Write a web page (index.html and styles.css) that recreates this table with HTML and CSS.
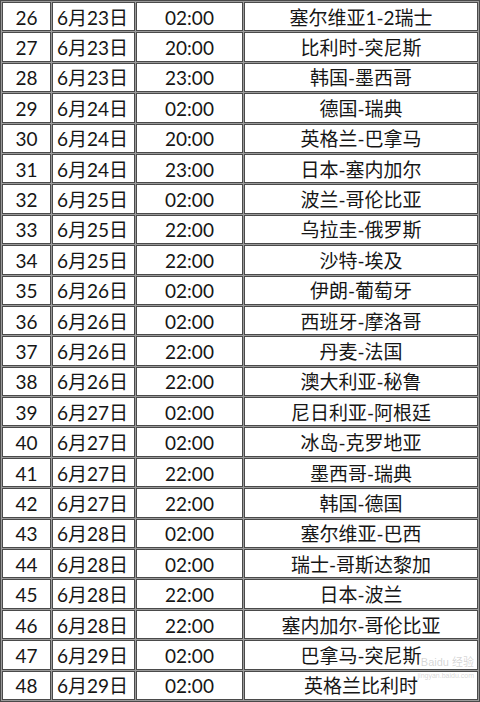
FILE: index.html
```html
<!DOCTYPE html>
<html lang="zh">
<head>
<meta charset="utf-8">
<link rel="stylesheet" href="styles.css">
</head>
<body>
<div class="wrap">
<table class="sched">
<colgroup><col class="c1"><col class="c2"><col class="c3"><col class="c4"></colgroup>
<tbody>
<tr><td class="num">26</td><td class="date">6月23日</td><td class="time">02:00</td><td class="match">塞尔维亚1-2瑞士</td></tr>
<tr><td class="num">27</td><td class="date">6月23日</td><td class="time">20:00</td><td class="match">比利时-突尼斯</td></tr>
<tr><td class="num">28</td><td class="date">6月23日</td><td class="time">23:00</td><td class="match">韩国-墨西哥</td></tr>
<tr><td class="num">29</td><td class="date">6月24日</td><td class="time">02:00</td><td class="match">德国-瑞典</td></tr>
<tr><td class="num">30</td><td class="date">6月24日</td><td class="time">20:00</td><td class="match">英格兰-巴拿马</td></tr>
<tr><td class="num">31</td><td class="date">6月24日</td><td class="time">23:00</td><td class="match">日本-塞内加尔</td></tr>
<tr><td class="num">32</td><td class="date">6月25日</td><td class="time">02:00</td><td class="match">波兰-哥伦比亚</td></tr>
<tr><td class="num">33</td><td class="date">6月25日</td><td class="time">22:00</td><td class="match">乌拉圭-俄罗斯</td></tr>
<tr><td class="num">34</td><td class="date">6月25日</td><td class="time">22:00</td><td class="match">沙特-埃及</td></tr>
<tr><td class="num">35</td><td class="date">6月26日</td><td class="time">02:00</td><td class="match">伊朗-葡萄牙</td></tr>
<tr><td class="num">36</td><td class="date">6月26日</td><td class="time">02:00</td><td class="match">西班牙-摩洛哥</td></tr>
<tr><td class="num">37</td><td class="date">6月26日</td><td class="time">22:00</td><td class="match">丹麦-法国</td></tr>
<tr><td class="num">38</td><td class="date">6月26日</td><td class="time">22:00</td><td class="match">澳大利亚-秘鲁</td></tr>
<tr><td class="num">39</td><td class="date">6月27日</td><td class="time">02:00</td><td class="match">尼日利亚-阿根廷</td></tr>
<tr><td class="num">40</td><td class="date">6月27日</td><td class="time">02:00</td><td class="match">冰岛-克罗地亚</td></tr>
<tr><td class="num">41</td><td class="date">6月27日</td><td class="time">22:00</td><td class="match">墨西哥-瑞典</td></tr>
<tr><td class="num">42</td><td class="date">6月27日</td><td class="time">22:00</td><td class="match">韩国-德国</td></tr>
<tr><td class="num">43</td><td class="date">6月28日</td><td class="time">02:00</td><td class="match">塞尔维亚-巴西</td></tr>
<tr><td class="num">44</td><td class="date">6月28日</td><td class="time">02:00</td><td class="match">瑞士-哥斯达黎加</td></tr>
<tr><td class="num">45</td><td class="date">6月28日</td><td class="time">22:00</td><td class="match">日本-波兰</td></tr>
<tr><td class="num">46</td><td class="date">6月28日</td><td class="time">22:00</td><td class="match">塞内加尔-哥伦比亚</td></tr>
<tr><td class="num">47</td><td class="date">6月29日</td><td class="time">02:00</td><td class="match">巴拿马-突尼斯</td></tr>
<tr><td class="num">48</td><td class="date">6月29日</td><td class="time">02:00</td><td class="match">英格兰比利时</td></tr>
</tbody>
</table>
<div class="watermark">Baidu 经验<br><span class="wm-url">jingyan.baidu.com</span></div>
</div>
</body>
</html>
```
FILE: styles.css
```css
html, body {
  margin: 0;
  padding: 0;
  background: #fff;
}
.wrap {
  position: relative;
  width: 480px;
  height: 702px;
  overflow: hidden;
}
.sched {
  width: 480px;
  height: 702px;
  table-layout: fixed;
  border-collapse: separate;
  border-spacing: 1px;
  border: 1px solid #4a4a4a;
  background: #9a9a9a;
  font-family: "Lato", "Noto Sans CJK SC", sans-serif;
  font-size: 19px;
  color: #161616;
}
.c1 { width: 49px; }
.c2 { width: 83px; }
.c3 { width: 107px; }
.c4 { width: auto; }
.sched td {
  background: #fff;
  border: 1px solid #4a4a4a;
  padding: 1px 0 0 0;
  white-space: nowrap;
  vertical-align: middle;
  line-height: 1;
}
.num, .time, .match { text-align: center; }
.date { text-align: left; padding-left: 4px !important; }
.watermark {
  position: absolute;
  right: 6px;
  bottom: 22px;
  font-family: "Liberation Sans", "Noto Sans CJK SC", sans-serif;
  font-size: 11px;
  color: rgba(150, 150, 150, 0.4);
  line-height: 1.1;
  text-align: right;
}
.wm-url { font-size: 7px; }
```
